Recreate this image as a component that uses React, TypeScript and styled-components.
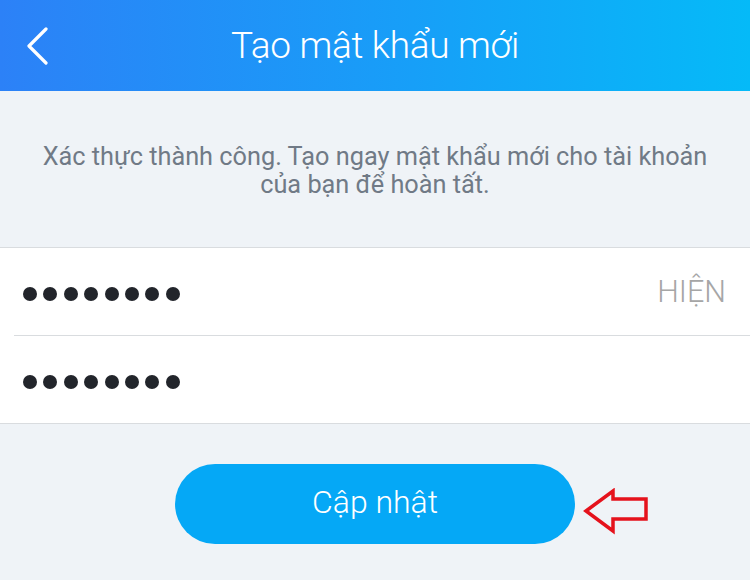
import React from "react";
import styled, { createGlobalStyle } from "styled-components";

const GlobalStyle = createGlobalStyle`
  html, body { margin: 0; padding: 0; }
  body {
    background: #eff3f7;
    font-family: Roboto, "Noto Sans", "Liberation Sans", sans-serif;
    width: 750px;
    height: 580px;
    overflow: hidden;
  }
`;

const Screen = styled.div`
  width: 750px;
  height: 580px;
  display: flex;
  flex-direction: column;
  background: #eff3f7;
`;

const Header = styled.header`
  height: 91px;
  flex: none;
  display: grid;
  grid-template-columns: 1fr auto 1fr;
  align-items: center;
  background: linear-gradient(90deg, #2c81f7 0%, #179ff8 55%, #05baf8 100%);
  color: #fff;
`;

const BackButton = styled.button`
  justify-self: start;
  margin-left: 22px;
  padding: 0;
  border: 0;
  background: transparent;
  width: 30px;
  height: 40px;
  display: flex;
  align-items: center;
  justify-content: center;
  cursor: pointer;
`;

const Title = styled.h1`
  margin: 0;
  font-size: 37px;
  font-weight: 300;
  letter-spacing: -0.3px;
  color: #fff;
`;

const Intro = styled.section`
  height: 156px;
  display: flex;
  align-items: center;
  justify-content: center;
  padding: 4px 20px 0;
  box-sizing: border-box;
`;

const IntroText = styled.p`
  margin: 0;
  text-align: center;
  font-size: 25.3px;
  line-height: 28px;
  font-weight: 400;
  color: #707a86;
`;

const Form = styled.div`
  background: #fff;
  border-top: 1px solid #d9dcdf;
  border-bottom: 1px solid #d9dcdf;
`;

const Row = styled.div<{ $divider?: boolean }>`
  display: flex;
  align-items: center;
  justify-content: space-between;
  padding-right: 24px;
  box-sizing: border-box;
  border-bottom: ${(p) => (p.$divider ? "1px solid #d9dcdf" : "none")};
  margin-left: ${(p) => (p.$divider ? "14px" : "0")};
  padding-left: ${(p) => (p.$divider ? "9px" : "23px")};
  height: ${(p) => (p.$divider ? "88px" : "87px")};
`;

const Dots = styled.div`
  display: flex;
  gap: 6.4px;
  padding-top: 5px;
`;

const Dot = styled.span`
  width: 14px;
  height: 14px;
  border-radius: 50%;
  background: #22252b;
`;

const ShowToggle = styled.span`
  font-size: 30.5px;
  font-weight: 300;
  color: #a6a6a6;
`;

const Actions = styled.div`
  display: flex;
  justify-content: center;
  padding-top: 40px;
`;

const ButtonWrap = styled.div`
  position: relative;
`;

const PrimaryButton = styled.button`
  width: 400px;
  height: 80px;
  border: 0;
  border-radius: 40px;
  background: #05a8f6;
  color: #fff;
  font-family: Roboto, "Noto Sans", sans-serif;
  font-size: 32px;
  font-weight: 300;
  cursor: pointer;
  padding: 0 0 4px;
`;

const Annotation = styled.svg`
  position: absolute;
  left: 408px;
  top: 24px;
`;

const PasswordDots = ({ count }: { count: number }) => (
  <Dots aria-label="password">
    {Array.from({ length: count }).map((_, i) => (
      <Dot key={i} />
    ))}
  </Dots>
);

export default function App() {
  return (
    <>
      <GlobalStyle />
      <Screen>
        <Header>
          <BackButton aria-label="Back">
            <svg width="24" height="38" viewBox="0 0 24 38" fill="none">
              <path
                d="M21 2 L4 19 L21 36"
                stroke="#fff"
                strokeWidth="3.2"
                strokeLinecap="round"
                strokeLinejoin="round"
              />
            </svg>
          </BackButton>
          <Title>Tạo mật khẩu mới</Title>
          <span />
        </Header>
        <Intro>
          <IntroText>
            Xác thực thành công. Tạo ngay mật khẩu mới cho tài khoản
            <br />
            của bạn để hoàn tất.
          </IntroText>
        </Intro>
        <Form>
          <Row $divider>
            <PasswordDots count={8} />
            <ShowToggle>HIỆN</ShowToggle>
          </Row>
          <Row>
            <PasswordDots count={8} />
          </Row>
        </Form>
        <Actions>
          <ButtonWrap>
            <PrimaryButton>Cập nhật</PrimaryButton>
            <Annotation width="66" height="48" viewBox="0 0 66 48" fill="none">
              <path
                d="M3 23 L30 3 L30 11 L63 11 L63 31 L30 31 L30 43 Z"
                stroke="#e5121c"
                strokeWidth="3.5"
                strokeLinejoin="miter"
              />
            </Annotation>
          </ButtonWrap>
        </Actions>
      </Screen>
    </>
  );
}
